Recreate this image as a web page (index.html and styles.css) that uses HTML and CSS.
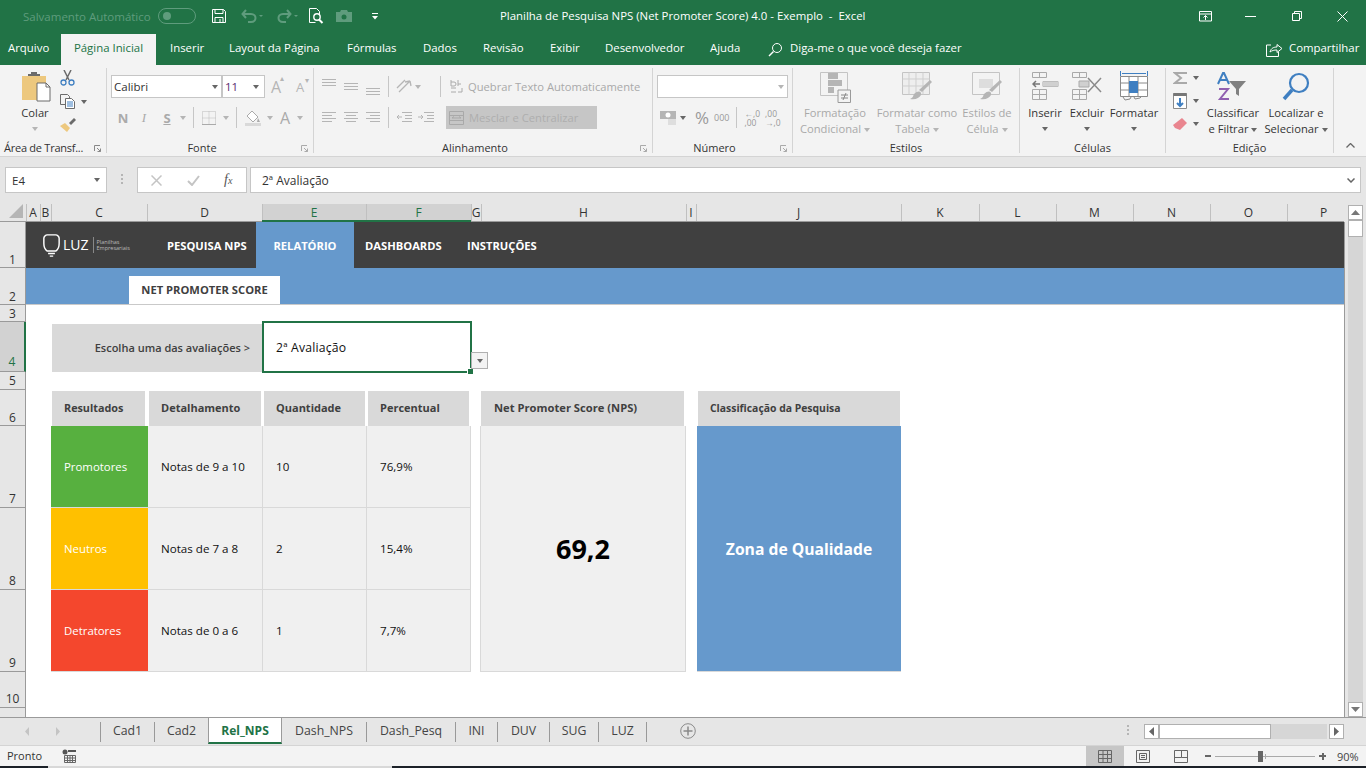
FILE: index.html
```html
<!DOCTYPE html>
<html lang="pt-br">
<head>
    <meta charset="utf-8">
    <title>Planilha de Pesquisa NPS (Net Promoter Score) 4.0 - Exemplo - Excel</title>
    <link rel="stylesheet" href="styles.css">
</head>
<body>
<div id="app">
    <div id="titlebar">
        <span class="autosave">Salvamento Automático</span>
        <span class="toggle"><i></i></span>
        <div class="quick">
            <svg class="q-save" width="14" height="14" viewBox="0 0 14 14"><path d="M.5.5h11l2 2v11H.5zM3 .5v4h8v-4M3 13.5V8.5h8v5M8 10v3" fill="none" stroke="#fff"/></svg>
            <svg class="q-undo" width="22" height="14" viewBox="0 0 22 14"><path d="M5 1 1.500 5 5 9M2 5h8c6 0 6 8 0 8H7" fill="none" stroke="#5f9c7d" stroke-width="2"/><path d="M18 6h4l-2 2z" fill="#5f9c7d"/></svg>
            <svg class="q-redo" width="22" height="14" viewBox="0 0 22 14"><path d="M11 1l3.500 4L11 9M14 5H7c-6 0-6 8 0 8h3" fill="none" stroke="#5f9c7d" stroke-width="2"/><path d="M18 6h4l-2 2z" fill="#5f9c7d"/></svg>
            <svg class="q-prev" width="15" height="16" viewBox="0 0 15 16"><path d="M.5.500h7l3 3v3M.5.500v14h6" fill="none" stroke="#fff"/><circle cx="8" cy="9" r="3.200" fill="none" stroke="#fff" stroke-width="1.400"/><path d="M10 11.500l3.500 3.500" stroke="#fff" stroke-width="2"/></svg>
            <svg class="q-cam" width="16" height="12" viewBox="0 0 16 12"><path d="M0 2h4l1-2h6l1 2h4v10H0z" fill="#5f9c7d"/><circle cx="8" cy="7" r="2.500" fill="#217346"/></svg>
            <svg class="q-more" width="8" height="7" viewBox="0 0 8 7"><path d="M1 .5h6" stroke="#fff"/><path d="M1 3h6L4 6.500z" fill="#fff"/></svg>
        </div>
        <span class="doc-title">Planilha de Pesquisa NPS (Net Promoter Score) 4.0 - Exemplo &nbsp;- &nbsp;Excel</span>
        <div class="winbtns">
            <svg width="14" height="11" viewBox="0 0 14 11"><path d="M.5.500h12v9.500H.5zM.5 3h12M6.500 9V4.500M4.500 6.500l2-2 2 2" fill="none" stroke="#fff"/></svg>
            <svg width="11" height="1" viewBox="0 0 11 1"><path d="M0 .5h11" stroke="#fff"/></svg>
            <svg width="10" height="10" viewBox="0 0 10 10"><path d="M.5 2.500h7v7h-7zM2.500 2.500v-2h7v7h-2" fill="none" stroke="#fff"/></svg>
            <svg width="11" height="11" viewBox="0 0 11 11"><path d="M.5.500l10 10M10.500.500l-10 10" stroke="#fff"/></svg>
        </div>
    </div>

    <div id="menutabs">
        <a class="menu-file">Arquivo</a>
        <a class="menu-home">Página Inicial</a>
        <a class="m-inserir">Inserir</a>
        <a class="m-layout">Layout da Página</a>
        <a class="m-form">Fórmulas</a>
        <a class="m-dados">Dados</a>
        <a class="m-rev">Revisão</a>
        <a class="m-exib">Exibir</a>
        <a class="m-dev">Desenvolvedor</a>
        <a class="m-ajuda">Ajuda</a>
        <svg class="m-bulb" width="15" height="15" viewBox="0 0 15 15"><circle cx="9" cy="6" r="4.500" fill="none" stroke="#fff"/><path d="M5.500 9.500L1 14" stroke="#fff" stroke-width="1.500"/></svg>
        <span class="m-tell">Diga-me o que você deseja fazer</span>
        <svg class="m-share" width="17" height="15" viewBox="0 0 17 15"><path d="M5 3H.5v11.500h12V10" fill="none" stroke="#fff"/><path d="M4 10c1-4 4-5 7-5V2.500L16 6.500l-5 4V8c-3 0-5 .5-7 2z" fill="none" stroke="#fff"/></svg>
        <span class="m-comp">Compartilhar</span>
    </div>

    <div id="ribbon">
        <section class="group g-clip">
            <div class="tools">
                <div class="big b-paste">
                    <svg width="30" height="30" viewBox="0 0 30 30"><path d="M0 4h24v24H0z" fill="#edc87e"/><path d="M6 4h12v-2h-3V0h-6v2H6z" fill="#6b6b6b"/><path d="M15 11h9l4 4v14H15z" fill="#fff" stroke="#6b6b6b"/><path d="M24 11v4h4" fill="none" stroke="#6b6b6b"/></svg>
                    <span class="lbl">Colar</span>
                    <b class="caret"></b>
                </div>
                <div class="clip-col">
                    <svg width="15" height="16" viewBox="0 0 15 16"><path d="M4 0l5 10M11 0L6 10" stroke="#6b6b6b" stroke-width="1.500"/><circle cx="3.500" cy="12.500" r="2.500" fill="none" stroke="#3f7fc1" stroke-width="1.300"/><circle cx="11.500" cy="12.500" r="2.500" fill="none" stroke="#3f7fc1" stroke-width="1.300"/></svg>
                    <div class="clip-copy">
                        <svg width="16" height="15" viewBox="0 0 16 15"><path d="M.5.500h7l2 2v2M.5.500v10H5" fill="none" stroke="#6b6b6b"/><path d="M5.500 4.500h6l3 3v7h-9z" fill="#fff" stroke="#6b6b6b"/><path d="M7 8h6M7 10h6M7 12h6" stroke="#3f7fc1"/></svg>
                        <b class="caret dark"></b>
                    </div>
                    <svg width="16" height="15" viewBox="0 0 16 15"><path d="M9 6L14 1l2 2-5 5z" fill="#6b6b6b"/><path d="M0 9l5-3 5 5-3 4z" fill="#edc87e"/></svg>
                </div>
            </div>
            <footer>Área de Transf...<svg class="launch" viewBox="0 0 7 7"><path d="M.5 6V.5H6M3 3l3.500 3.500M6.500 3.500v3h-3" fill="none" stroke="#888"/></svg></footer>
        </section>

        <section class="group g-font">
            <div class="rows">
                <div class="row r-a">
                    <div class="combo c-font"><span>Calibri</span><b class="caret dark"></b></div>
                    <div class="combo c-size"><span>11</span><b class="caret dark"></b></div>
                    <span class="grow-a">A<sup>▴</sup></span>
                    <span class="shrink-a">A<sup>▾</sup></span>
                </div>
                <div class="row r-b">
                    <span class="fmt f-n">N</span>
                    <span class="fmt f-i">I</span>
                    <span class="fmt f-s">S</span>
                    <b class="caret"></b>
                    <i class="vsep s1"></i>
                    <svg class="f-border" width="14" height="14" viewBox="0 0 14 14"><path d="M.5.500h13v13H.5zM7 .5v13M.5 7h13" fill="none" stroke="#bbb" stroke-dasharray="1 1"/><path d="M0 13.500h14" stroke="#aaa"/></svg>
                    <b class="caret"></b>
                    <i class="vsep s2"></i>
                    <svg class="f-fill" width="16" height="16" viewBox="0 0 16 16"><path d="M7 1l6 6-5 5-6-6z" fill="#fff" stroke="#aaa"/><path d="M13 8l2 4h-3z" fill="#aaa"/><path d="M0 13h16v3H0z" fill="#d9d9d9"/></svg>
                    <b class="caret"></b>
                    <span class="fmt f-a">A</span>
                    <b class="caret"></b>
                </div>
            </div>
            <footer class="has-launch">Fonte<svg class="launch" viewBox="0 0 7 7"><path d="M.5 6V.5H6M3 3l3.500 3.500M6.500 3.500v3h-3" fill="none" stroke="#aaa"/></svg></footer>
        </section>

        <section class="group g-align">
            <div class="rows">
                <div class="row r-a">
                    <svg class="al" width="14" height="16" viewBox="0 0 14 16"><path d="M0 .5h14M0 3.500h14M0 6.500h14" stroke="#b5b5b5"/></svg>
                    <svg class="al" width="14" height="16" viewBox="0 0 14 16"><path d="M0 4.500h14M0 7.500h14M0 10.500h14" stroke="#b5b5b5"/></svg>
                    <svg class="al" width="14" height="16" viewBox="0 0 14 16"><path d="M0 9.500h14M0 12.500h14M0 15.500h14" stroke="#b5b5b5"/></svg>
                    <i class="vsep al-s1"></i>
                    <svg class="al-or" width="16" height="15" viewBox="0 0 16 15"><path d="M1 9l8-8M3 13l11-11M14 2l1 5M14 2L9 3" fill="none" stroke="#b5b5b5" stroke-width="1.300"/></svg>
                    <b class="caret"></b>
                    <i class="vsep al-s2"></i>
                    <svg class="al-wrap" width="13" height="15" viewBox="0 0 13 15"><path d="M1 1v6h3a2 2 0 0 0 0-4H1M8 1v6M8 5h3M1 9h5M1 13h5M12 9v4H8" fill="none" stroke="#aaa"/></svg>
                    <span class="dis">Quebrar Texto Automaticamente</span>
                </div>
                <div class="row r-b">
                    <svg class="al" width="14" height="12" viewBox="0 0 14 12"><path d="M0 .5h14M0 3.500h10M0 6.500h14M0 9.500h10" stroke="#b5b5b5"/></svg>
                    <svg class="al" width="14" height="12" viewBox="0 0 14 12"><path d="M0 .5h14M2 3.500h10M0 6.500h14M2 9.500h10" stroke="#b5b5b5"/></svg>
                    <svg class="al" width="14" height="12" viewBox="0 0 14 12"><path d="M0 .5h14M4 3.500h10M0 6.500h14M4 9.500h10" stroke="#b5b5b5"/></svg>
                    <i class="vsep al-s1"></i>
                    <svg class="al-or" width="16" height="12" viewBox="0 0 16 12"><path d="M6 .5h10M9 3.500h7M9 6.500h7M6 9.500h10M6 5H1M3 3L1 5l2 2" fill="none" stroke="#b5b5b5"/></svg>
                    <svg class="al-in" width="16" height="12" viewBox="0 0 16 12"><path d="M6 .5h10M9 3.500h7M9 6.500h7M6 9.500h10M0 5h5M3 3l2 2-2 2" fill="none" stroke="#b5b5b5"/></svg>
                    <div class="merge">
                        <svg width="15" height="14" viewBox="0 0 15 14"><path d="M.5.500h14v13H.5zM.5 4.500h14M.5 9.500h14M3 7h9M3 7l2-1.500M12 7l-2-1.500" fill="none" stroke="#a9a9a9"/></svg>
                        <span>Mesclar e Centralizar</span>
                    </div>
                </div>
            </div>
            <footer class="has-launch">Alinhamento<svg class="launch" viewBox="0 0 7 7"><path d="M.5 6V.5H6M3 3l3.500 3.500M6.500 3.500v3h-3" fill="none" stroke="#aaa"/></svg></footer>
        </section>

        <section class="group g-num">
            <div class="rows">
                <div class="row r-a"><div class="combo c-num"><span></span><b class="caret"></b></div></div>
                <div class="row r-b">
                    <svg class="n-cur" width="17" height="16" viewBox="0 0 17 16"><path d="M0 1h16v8H0z" fill="#b5b5b5"/><circle cx="8" cy="5" r="2.500" fill="#fff"/><path d="M8 10h8M8 12h8M8 14h8" stroke="#c9c9c9" stroke-width="1.200"/></svg>
                    <b class="caret dark"></b>
                    <span class="n-pct">%</span>
                    <span class="n-mil">000</span>
                    <i class="vsep n-s"></i>
                    <span class="n-inc">←,0<br>,00</span>
                    <span class="n-dec">,00<br>→,0</span>
                </div>
            </div>
            <footer class="has-launch">Número<svg class="launch" viewBox="0 0 7 7"><path d="M.5 6V.5H6M3 3l3.500 3.500M6.500 3.500v3h-3" fill="none" stroke="#aaa"/></svg></footer>
        </section>

        <section class="group g-styles">
            <div class="tools">
                <div class="big st1">
                    <svg width="31" height="31" viewBox="0 0 31 31"><path d="M.5.500h27v23H.5z" fill="#f3f3f3" stroke="#c4c4c4"/><path d="M8 1h10v6H8zM8 8h14v6H8zM8 15h6v6H8z" fill="#b5b5b5"/><path d="M18 18h12.500v12.500H18z" fill="#f3f3f3" stroke="#9a9a9a"/><path d="M21 23h7M21 26h7M26 21l-3 7" stroke="#888"/></svg>
                    <span class="dis">Formatação</span>
                    <span class="dis">Condicional<b class="caret in"></b></span>
                </div>
                <div class="big st2">
                    <svg width="31" height="31" viewBox="0 0 31 31"><path d="M.5.500h27v22H.5z" fill="#eee" stroke="#c4c4c4"/><path d="M.5 7h27M.5 14h27M7 .5v22M14 .5v22M21 .5v22" stroke="#cfcfcf"/><path d="M30 10L20 20l-3-2 11-10z" fill="#b5b5b5"/><path d="M12 22c4-4 8-3 7 1-2 3-5 5-11 4 3-1 3-3 4-5z" fill="#b5b5b5"/></svg>
                    <span class="dis">Formatar como</span>
                    <span class="dis">Tabela<b class="caret in"></b></span>
                </div>
                <div class="big st3">
                    <svg width="31" height="31" viewBox="0 0 31 31"><path d="M.5.500h27v22H.5z" fill="#f3f3f3" stroke="#c4c4c4"/><path d="M7 7h14v9H7z" fill="#ddd"/><path d="M30 10L20 20l-3-2 11-10z" fill="#b5b5b5"/><path d="M12 22c4-4 8-3 7 1-2 3-5 5-11 4 3-1 3-3 4-5z" fill="#b5b5b5"/></svg>
                    <span class="dis">Estilos de</span>
                    <span class="dis">Célula<b class="caret in"></b></span>
                </div>
            </div>
            <footer>Estilos</footer>
        </section>

        <section class="group g-cells">
            <div class="tools">
                <div class="big ce1">
                    <svg width="27" height="29" viewBox="0 0 27 29"><path d="M.5.500h14v5H.5zM7.500.5v5M.5 17.500h14v10H.5zM.5 22.500h14M7.500 17.500v10M11 9.500h15v5H11zM18.500 9.500v5" fill="none" stroke="#a9a9a9"/><path d="M11 9.500h15v5H11z" fill="#d0d0d0"/><path d="M8 12H1M4 9l-3 3 3 3" fill="none" stroke="#777" stroke-width="1.500"/></svg>
                    <span class="lbl">Inserir</span><b class="caret dark"></b>
                </div>
                <div class="big ce2">
                    <svg width="30" height="29" viewBox="0 0 30 29"><path d="M.5.500h14v5H.5zM7.500.5v5M.5 17.500h14v10H.5zM.5 22.500h14M7.500 17.500v10" fill="none" stroke="#a9a9a9"/><path d="M7 9h10v6H7z" fill="#d0d0d0" stroke="#a9a9a9"/><path d="M16 6l13 14M29 6L16 20" stroke="#8a8a8a" stroke-width="1.500"/></svg>
                    <span class="lbl">Excluir</span><b class="caret dark"></b>
                </div>
                <div class="big ce3">
                    <svg width="28" height="31" viewBox="0 0 28 31"><path d="M.5 1v5M27.500 1v5M2 3.500h24" stroke="#3f7fc1"/><path d="M.5 6.500h27v20H.5zM.5 13h27M.5 20h27M9 6.500v20M18 6.500v20" fill="#fff" stroke="#8a8a8a"/><path d="M9 11h9v12H9z" fill="#3f7fc1"/><path d="M3 27l2 3 5-1 1-2M14 27l1 2 5-1 1-1" fill="none" stroke="#8a8a8a"/></svg>
                    <span class="lbl">Formatar</span><b class="caret dark"></b>
                </div>
            </div>
            <footer>Células</footer>
        </section>

        <section class="group g-edit">
            <div class="tools">
                <div class="edit-col">
                    <div class="edit-item"><svg width="14" height="12" viewBox="0 0 14 12"><path d="M14 1H2l6 5-6 5h12" fill="none" stroke="#a9a9a9" stroke-width="2"/></svg><b class="caret dark"></b></div>
                    <div class="edit-item"><svg width="14" height="16" viewBox="0 0 14 16"><path d="M.5.500h13v15H.5z" fill="#fff" stroke="#8a8a8a"/><path d="M.5 0h13v3H.5z" fill="#777"/><path d="M7 5v8M4 10l3 3 3-3" fill="none" stroke="#3f7fc1" stroke-width="2"/></svg><b class="caret dark"></b></div>
                    <div class="edit-item"><svg width="14" height="13" viewBox="0 0 14 13"><path d="M9 0l5 5-7 7-5-2-2-3z" fill="#e9858f"/></svg><b class="caret dark"></b></div>
                </div>
                <div class="big ed1">
                    <svg width="32" height="29" viewBox="0 0 32 29"><path d="M1 12L6 1h1l5 11M3 8h7" fill="none" stroke="#3f7fc1" stroke-width="2"/><path d="M2 17h9l-8 10h9" fill="none" stroke="#9060b0" stroke-width="2"/><path d="M12 9h17l-7 8v7l-3-2v-5z" fill="#808080"/></svg>
                    <span class="lbl">Classificar</span>
                    <span class="lbl">e Filtrar<b class="caret dark in"></b></span>
                </div>
                <div class="big ed2">
                    <svg width="28" height="30" viewBox="0 0 28 30"><circle cx="17" cy="11" r="9" fill="none" stroke="#3f7fc1" stroke-width="2.200"/><path d="M10 18L2 27" stroke="#3f7fc1" stroke-width="3.500"/></svg>
                    <span class="lbl">Localizar e</span>
                    <span class="lbl">Selecionar<b class="caret dark in"></b></span>
                </div>
            </div>
            <footer>Edição</footer>
        </section>
        <svg class="collapse" width="9" height="5" viewBox="0 0 9 5"><path d="M.5 4.500l4-4 4 4" fill="none" stroke="#666" stroke-width="1.300"/></svg>
    </div>

    <div id="formulabar">
        <div class="namebox"><span>E4</span><b class="caret dark"></b></div>
        <span class="fb-dots"></span>
        <div class="fb-btns">
            <svg width="11" height="11" viewBox="0 0 11 11"><path d="M.5.500l10 10M10.500.500l-10 10" stroke="#c4c4c4" stroke-width="1.500"/></svg>
            <svg width="13" height="11" viewBox="0 0 13 11"><path d="M1 6l4 4 7-9" fill="none" stroke="#c4c4c4" stroke-width="2"/></svg>
            <em>f<small>x</small></em>
        </div>
        <div class="fb-input"><span>2ª Avaliação</span><svg width="8" height="5" viewBox="0 0 8 5"><path d="M.5.500L4 4 7.500.500" fill="none" stroke="#666" stroke-width="1.500"/></svg></div>
    </div>

    <div id="workarea">
        <div id="sheet">
            <div class="corner"><svg width="14" height="14" viewBox="0 0 14 14"><path d="M14 0v14H0z" fill="#b5b5b5"/></svg></div>
            <div class="ch">A</div><div class="ch">B</div><div class="ch">C</div><div class="ch">D</div>
            <div class="ch on">E</div><div class="ch on">F</div><div class="ch">G</div><div class="ch">H</div>
            <div class="ch">I</div><div class="ch">J</div><div class="ch">K</div><div class="ch">L</div>
            <div class="ch">M</div><div class="ch">N</div><div class="ch">O</div><div class="ch ch-last">P</div>

            <div class="rh r1">1</div><div class="rh r2">2</div><div class="rh r3">3</div>
            <div class="rh r4 on">4</div><div class="rh r5">5</div><div class="rh r6">6</div>
            <div class="rh r7">7</div><div class="rh r8">8</div><div class="rh r9">9</div><div class="rh r10">10</div>
            <div class="rh r11"></div>

            <nav class="navband">
                <div class="logo">
                    <svg width="17" height="25" viewBox="0 0 20 27"><path d="M5 20C2 18 1 15 1 11V5c0-2 2-4 4-4h10c2 0 4 2 4 4v6c0 4-1 7-4 9zM6 23h8M8 26h4" fill="none" stroke="#fff" stroke-width="1.700"/></svg>
                    <span class="logo-luz">LUZ</span>
                    <span class="logo-sub">Planilhas<br>Empresariais</span>
                </div>
                <a class="n1">PESQUISA NPS</a>
                <a class="n2">RELATÓRIO</a>
                <a class="n3">DASHBOARDS</a>
                <a class="n4">INSTRUÇÕES</a>
            </nav>
            <div class="subband"><span>NET PROMOTER SCORE</span></div>

            <div class="pick-label">Escolha uma das avaliações &gt;</div>
            <div class="pick-cell">2ª Avaliação<i class="handle"></i><span class="dd"><b class="caret dark"></b></span></div>

            <div class="th c-c">Resultados</div>
            <div class="th c-d">Detalhamento</div>
            <div class="th c-e">Quantidade</div>
            <div class="th c-f">Percentual</div>
            <div class="th c-h">Net Promoter Score (NPS)</div>
            <div class="th c-j">Classificação da Pesquisa</div>

            <div class="td res green y7">Promotores</div>
            <div class="td c-d y7">Notas de 9 a 10</div>
            <div class="td c-e y7">10</div>
            <div class="td c-f y7">76,9%</div>
            <div class="td res amber y8">Neutros</div>
            <div class="td c-d y8">Notas de 7 a 8</div>
            <div class="td c-e y8">2</div>
            <div class="td c-f y8">15,4%</div>
            <div class="td res red y9">Detratores</div>
            <div class="td c-d y9">Notas de 0 a 6</div>
            <div class="td c-e y9">1</div>
            <div class="td c-f y9">7,7%</div>

            <div class="score">69,2</div>
            <div class="zone">Zona de Qualidade</div>
        </div>
        <div class="vscroll">
            <span class="sbtn"><svg width="9" height="5" viewBox="0 0 9 5"><path d="M4.500 0L9 5H0z" fill="#777"/></svg></span>
            <span class="vthumb"></span>
            <span class="vtrack"></span>
            <span class="sbtn"><svg width="9" height="5" viewBox="0 0 9 5"><path d="M4.500 5L9 0H0z" fill="#777"/></svg></span>
        </div>
    </div>

    <div id="tabsbar">
        <svg class="tab-nav" width="36" height="9" viewBox="0 0 36 9"><path d="M4 0v9L0 4.500zM31 0v9l4-4.500z" fill="#c4c4c4"/></svg>
        <div class="tabs">
            <a>Cad1</a><a>Cad2</a><a class="active">Rel_NPS</a><a>Dash_NPS</a><a>Dash_Pesq</a><a>INI</a><a>DUV</a><a>SUG</a><a>LUZ</a>
        </div>
        <svg class="tab-add" width="16" height="16" viewBox="0 0 16 16"><circle cx="8" cy="8" r="7.300" fill="none" stroke="#8a8a8a"/><path d="M8 3.500v9M3.500 8h9" stroke="#8a8a8a" stroke-width="1.500"/></svg>
        <span class="tab-dots"></span>
        <div class="hscroll">
            <span class="sbtn"><svg width="5" height="9" viewBox="0 0 5 9"><path d="M0 4.500L5 0v9z" fill="#666"/></svg></span>
            <span class="hthumb"></span>
            <span class="htrack"></span>
            <span class="sbtn"><svg width="5" height="9" viewBox="0 0 5 9"><path d="M5 4.500L0 0v9z" fill="#666"/></svg></span>
        </div>
    </div>

    <div id="statusbar">
        <span class="st-ready">Pronto</span>
        <svg class="st-macro" width="14" height="14" viewBox="0 0 14 14"><circle cx="3" cy="3" r="2.500" fill="#555"/><path d="M6 1h8v2H6z" fill="#555"/><path d="M2.500 6.500h11v7h-11zM2.500 9h11M2.500 11.500h11M5.500 6.500v7M8 6.500v7M10.500 6.500v7" fill="none" stroke="#666"/></svg>
        <div class="views">
            <span class="view on"><svg width="14" height="13" viewBox="0 0 14 13"><path d="M.5.500h13v12H.5zM.5 4.500h13M.5 8.500h13M5 .5v12M9.500 .5v12" fill="none" stroke="#666"/></svg></span>
            <span class="view"><svg width="14" height="13" viewBox="0 0 14 13"><path d="M.5.500h13v12H.5zM3.500 3.500h7v6h-7zM5 5.500h4M5 7.500h4" fill="none" stroke="#666"/></svg></span>
            <span class="view"><svg width="14" height="13" viewBox="0 0 14 13"><path d="M.5.500h13v12H.5zM.5 7.500h7v-7M7.500 7.500h6" fill="none" stroke="#666"/></svg></span>
        </div>
        <div class="zoom">
            <i class="z-minus"></i>
            <div class="z-track"><i class="z-mid"></i><i class="z-thumb"></i></div>
            <i class="z-plus"></i>
            <span>90%</span>
        </div>
    </div>
    <div id="taskstrip"><i></i></div>
</div>
</body>
</html>
```

FILE: styles.css
```css
* {
    box-sizing: border-box;
}

html, body {
    margin: 0;
    height: 100%;
    overflow: hidden;
}

body {
    font-family: "Open Sans", "Noto Sans", sans-serif;
    font-size: 12px;
    color: #333;
}

#app {
    width: 1366px;
    height: 768px;
    display: flex;
    flex-direction: column;
    background: #e6e6e6;
}

svg {
    display: block;
    flex: none;
}

.caret {
    display: block;
    flex: none;
    width: 0;
    height: 0;
    border-left: 3.500px solid transparent;
    border-right: 3.500px solid transparent;
    border-top: 4px solid #b5b5b5;
}

.caret.dark {
    border-top-color: #666;
}

/* title bar */

#titlebar {
    height: 34px;
    flex: none;
    background: #217346;
    color: #fff;
    display: flex;
    align-items: center;
    padding: 0 0 2px 23px;
    position: relative;
}

.autosave {
    width: 135px;
    color: #5f9c7d;
    font-size: 11.500px;
    white-space: nowrap;
}

.toggle {
    width: 38px;
    height: 16px;
    border: 1px solid #5f9c7d;
    border-radius: 8px;
    padding: 3px 4px;
}

.toggle i {
    display: block;
    width: 8px;
    height: 8px;
    border-radius: 50%;
    background: #5f9c7d;
}

.quick {
    display: flex;
    align-items: center;
    margin-left: 16px;
}

.q-undo { margin-left: 15px; }
.q-redo { margin-left: 13px; }
.q-prev { margin-left: 11px; }
.q-cam { margin-left: 12px; }
.q-more { margin-left: 19px; }

.doc-title {
    position: absolute;
    left: 500px;
    top: 8px;
    white-space: nowrap;
    font-size: 11.400px;
}

.winbtns {
    margin-left: auto;
    display: flex;
    align-items: center;
    width: 168px;
    padding-left: 1px;
}

.winbtns svg:nth-child(1) { margin-right: 32px; }
.winbtns svg:nth-child(2) { margin-right: 36px; }
.winbtns svg:nth-child(3) { margin-right: 35px; }

/* menu tabs */

#menutabs {
    height: 31px;
    flex: none;
    background: #217346;
    position: relative;
    color: #fff;
}

#menutabs a, #menutabs span, #menutabs svg {
    position: absolute;
    top: 6px;
    white-space: nowrap;
    font-size: 11.400px;
}

#menutabs .menu-home {
    left: 61px;
    top: 0;
    width: 95px;
    height: 31px;
    padding-top: 6px;
    background: #f3f3f3;
    color: #217346;
    text-align: center;
}

.menu-file { left: 8px; }
.m-inserir { left: 170px; }
.m-layout { left: 229px; }
.m-form { left: 347px; }
.m-dados { left: 423px; }
.m-rev { left: 483px; }
.m-exib { left: 550px; }
.m-dev { left: 605px; }
.m-ajuda { left: 710px; }
#menutabs .m-bulb { left: 768px; top: 8px; }
.m-tell { left: 790px; }
#menutabs .m-share { left: 1266px; top: 8px; }
.m-comp { left: 1289px; }

/* ribbon */

#ribbon {
    height: 92px;
    flex: none;
    background: #f3f3f3;
    border-bottom: 1px solid #d4d4d4;
    display: flex;
    padding-top: 3px;
    position: relative;
}

.group {
    position: relative;
    border-right: 1px solid #d4d4d4;
    height: 85px;
    flex: none;
}

.group footer {
    position: absolute;
    left: 0;
    right: 0;
    bottom: -3px;
    height: 16px;
    line-height: 16px;
    text-align: center;
    font-size: 11px;
    white-space: nowrap;
}

.group footer.has-launch {
    padding-right: 16px;
}

.launch {
    position: absolute;
    right: 5px;
    top: 5px;
    width: 7px;
    height: 7px;
}

.g-clip { width: 107px; }
.g-font { width: 207px; }
.g-align { width: 339px; }
.g-num { width: 140px; }
.g-styles { width: 227px; }
.g-cells { width: 146px; }
.g-edit { width: 168px; }

.g-clip footer {
    text-align: left;
    padding-left: 4px;
    letter-spacing: -.25px;
}

.tools {
    display: flex;
}

.big {
    display: flex;
    flex-direction: column;
    align-items: center;
    flex: none;
    line-height: 16px;
    white-space: nowrap;
}

.big svg {
    margin-bottom: 2px;
}

.lbl {
    color: #333;
    font-size: 11.200px;
}

.dis {
    color: #a9a9a9;
    font-size: 11.200px;
}

.big > .caret {
    margin-top: 6px;
}

.caret.in {
    display: inline-block;
    vertical-align: middle;
    margin-left: 3px;
}

.b-paste {
    width: 30px;
    margin-left: 22px;
    padding-top: 4px;
}

.b-paste svg { margin-bottom: 3px; }

.b-paste .lbl, .b-paste .caret {
    margin-left: -4px;
}

.clip-col {
    margin-left: 8px;
    display: flex;
    flex-direction: column;
    gap: 8px;
    padding-top: 2px;
}

.clip-copy {
    display: flex;
    align-items: center;
    gap: 5px;
}

.rows {
    display: flex;
    flex-direction: column;
}

.row {
    display: flex;
    align-items: center;
    height: 23px;
}

.row.r-a {
    margin-top: 7px;
}

.row.r-b {
    margin-top: 8px;
}

.combo {
    height: 23px;
    background: #fff;
    border: 1px solid #c6c6c6;
    display: flex;
    align-items: center;
    justify-content: space-between;
    padding: 0 3px 0 2px;
    font-size: 11.500px;
    flex: none;
}

.vsep {
    display: block;
    width: 1px;
    height: 21px;
    background: #c6c6c6;
    flex: none;
}

/* font group */

.g-font .rows { padding-left: 4px; }

.c-font { width: 111px; }
.c-size { width: 43px; color: #5b2c6f; padding-right: 5px; }

.grow-a, .shrink-a {
    color: #b5b5b5;
    font-size: 16px;
    margin-left: 6px;
    width: 16px;
    position: relative;
}

.shrink-a { font-size: 13px; margin-left: 9px; }

.grow-a sup, .shrink-a sup {
    position: absolute;
    left: 9px;
    top: -4px;
    font-size: 8px;
}

.fmt {
    color: #aaa;
    font-weight: 700;
    font-size: 13px;
    width: 12px;
    text-align: center;
    flex: none;
}

.f-n { margin-left: 6px; }
.f-i { margin-left: 9px; font-style: italic; font-weight: 400; font-family: "Liberation Serif", serif; }
.f-s { margin-left: 11px; text-decoration: underline; }
.r-b .f-s + .caret { margin-left: 7px; }
.s1 { margin-left: 7px; }
.f-border { margin-left: 8px; }
.f-border + .caret { margin-left: 7px; }
.s2 { margin-left: 7px; }
.f-fill { margin-left: 8px; }
.f-fill + .caret { margin-left: 6px; }
.f-a { font-size: 16px; margin-left: 6px; font-weight: 400; }
.f-a + .caret { margin-left: 6px; }

/* alignment group */

.g-align .rows { padding-left: 8px; }

.al { margin-right: 8px; }
.al-or { margin-left: 7px; }
.al-or + .caret { margin-left: 3px; }
.al-s2 { margin-left: 19px; }
.al-wrap { margin-left: 9px; margin-right: 5px; }
.al-in { margin-left: 6px; }

.merge {
    margin-left: 12px;
    width: 151px;
    height: 23px;
    background: #c6c6c6;
    display: flex;
    align-items: center;
    gap: 5px;
    padding-left: 3px;
    color: #aeaeae;
    font-size: 11.200px;
    white-space: nowrap;
}

/* number group */

.g-num .rows { padding-left: 4px; }

.c-num { width: 131px; justify-content: flex-end; }

.n-cur { margin-left: 3px; }
.n-cur + .caret { margin-left: 3px; }
.n-pct { margin-left: 9px; font-size: 17px; line-height: 20px; color: #999; }
.n-mil { margin-left: 5px; font-size: 9px; color: #999; }
.n-s { margin-left: 6px; }

.n-inc, .n-dec {
    font-size: 8.500px;
    line-height: 9px;
    color: #999;
    white-space: nowrap;
}

.n-inc { margin-left: 8px; }
.n-dec { margin-left: 5px; }

/* styles group */

.g-styles .tools {
    padding-top: 4px;
}

.st1 { width: 84px; }
.st2 { width: 84px; margin-left: -2px; }
.st3 { width: 60px; margin-left: -2px; }

/* cells group */

.g-cells .tools { padding-top: 4px; padding-left: 6px; }
.ce1 { width: 38px; }
.ce2 { width: 46px; }
.ce3 { width: 52px; margin-left: -2px; }
.g-cells .big svg { margin-bottom: 4px; }
.ce3 svg { margin-top: -2px; }

/* editing group */

.g-edit .tools { padding-top: 2px; padding-left: 7px; }

.edit-col {
    width: 32px;
    display: flex;
    flex-direction: column;
    gap: 7px;
}

.edit-item {
    display: flex;
    align-items: center;
    gap: 6px;
    height: 16px;
}

.ed1 { width: 60px; margin-left: -2px; margin-top: 2px; }
.ed2 { width: 62px; margin-left: 2px; margin-top: 2px; }
.ed1 svg { margin-bottom: 4px; }
.ed2 svg { margin-bottom: 3px; }

.collapse {
    position: absolute;
    left: 1346px;
    top: 78px;
}

/* formula bar */

#formulabar {
    height: 47px;
    flex: none;
    padding: 10px 5px 11px;
    display: flex;
    align-items: stretch;
}

.namebox, .fb-btns, .fb-input {
    background: #fff;
    border: 1px solid #c6c6c6;
    display: flex;
    align-items: center;
    flex: none;
}

.namebox {
    width: 102px;
    justify-content: space-between;
    padding: 0 6px;
    font-size: 11.500px;
}

.fb-dots {
    width: 2px;
    margin: 7px 14px 7px 14px;
    background: repeating-linear-gradient(#b5b5b5 0 2px, transparent 2px 4px);
}

.fb-btns {
    width: 110px;
    padding-left: 13px;
    gap: 25px;
}

.fb-btns em {
    font-family: "Liberation Serif", serif;
    color: #555;
    font-size: 14px;
    margin-left: -1px;
}

.fb-btns small { font-size: 10px; }

.fb-input {
    width: 1111px;
    margin-left: 3px;
    padding: 0 5px 0 11px;
    justify-content: space-between;
    font-size: 12px;
}

/* sheet */

#workarea {
    height: 513px;
    flex: none;
    display: flex;
}

#sheet {
    width: 1344px;
    background: #fff;
    display: grid;
    grid-template-columns: 26px 14px 11px 96px 115px 104px 105px 10px 205px 10px 205px 78px 77px 77px 77px 77px 57px;
    grid-template-rows: 18px 46px 37px 17px 50px 18px 36px 82px 82px 82px 36px 9px;
    position: relative;
}

.corner {
    background: #e6e6e6;
    border-bottom: 1px solid #9a9a9a;
    display: flex;
    justify-content: flex-end;
    align-items: flex-end;
    padding: 0 3px 3px 0;
}

.ch {
    background: #e6e6e6;
    border-bottom: 1px solid #9a9a9a;
    text-align: center;
    line-height: 17px;
    font-size: 12px;
    color: #333;
    position: relative;
}

.ch::before {
    content: "";
    position: absolute;
    left: 0;
    top: 0;
    bottom: 0;
    width: 1px;
    background: #c0c0c0;
}

.ch.on {
    background: #d2d2d2;
    color: #217346;
    border-bottom: 2px solid #217346;
}

.ch-last {
    text-align: left;
    padding-left: 33px;
}

.rh {
    grid-column: 1;
    background: #e6e6e6;
    border-right: 1px solid #9a9a9a;
    border-bottom: 1px solid #9a9a9a;
    display: flex;
    align-items: flex-end;
    justify-content: center;
    font-size: 12px;
    line-height: 17px;
    color: #333;
}

.rh.on {
    background: #d2d2d2;
    color: #217346;
    border-right: 2px solid #217346;
    padding-bottom: 1px;
}

.r1 { grid-row: 2; line-height: 15px; }
.r2 { grid-row: 3; line-height: 15px; }
.r3 { grid-row: 4; line-height: 15px; }
.r4 { grid-row: 5; }
.r5 { grid-row: 6; }
.r6 { grid-row: 7; line-height: 15px; }
.r7 { grid-row: 8; }
.r8 { grid-row: 9; }
.r9 { grid-row: 10; }
.r10 { grid-row: 11; }
.r11 { grid-row: 12; border-bottom: 0; }

.navband {
    grid-column: 2 / -1;
    grid-row: 2;
    background: #404040;
    display: flex;
    align-items: center;
    color: #fff;
    font-weight: 700;
    font-size: 11.200px;
    white-space: nowrap;
}

.logo {
    display: flex;
    align-items: center;
    width: 141px;
    padding-left: 17px;
    font-weight: 400;
}

.logo-luz {
    margin-left: 3px;
    font-size: 14px;
    padding-right: 4px;
    border-right: 1px solid #888;
    line-height: 16px;
}

.logo-sub {
    margin-left: 3px;
    font-size: 5.500px;
    line-height: 6.500px;
    color: #bbb;
}

.navband a {
    display: flex;
    align-items: center;
    height: 100%;
}

.n1 { width: 89px; }

.navband .n2 {
    width: 98px;
    background: #6699cc;
    justify-content: center;
}

.n3 { margin-left: 11px; width: 102px; }

.subband {
    grid-column: 2 / -1;
    grid-row: 3;
    background: #6699cc;
    border-bottom: 1px solid #c9c9c9;
    padding: 8px 0 0 103px;
    display: flex;
}

.subband span {
    width: 151px;
    background: #fff;
    text-align: center;
    line-height: 28px;
    font-weight: 700;
    font-size: 11.200px;
    color: #404040;
    white-space: nowrap;
}

.pick-label {
    grid-column: 2 / 6;
    grid-row: 5;
    margin-left: 26px;
    background: #d9d9d9;
    margin-top: 2px;
    text-align: right;
    padding-right: 12px;
    line-height: 48px;
    font-weight: 600;
    font-size: 11px;
    color: #404040;
}

.pick-cell {
    grid-column: 6 / 8;
    grid-row: 5;
    border: 2px solid #217346;
    padding-left: 12px;
    line-height: 49px;
    font-size: 12.200px;
    letter-spacing: .2px;
    color: #111;
    position: relative;
    height: 52px;
    margin: -1px -1px 0 0;
    z-index: 1;
}

.handle {
    position: absolute;
    right: -3px;
    bottom: -3px;
    width: 5px;
    height: 5px;
    background: #217346;
    border: 1px solid #fff;
    box-sizing: content-box;
    margin: -1px;
}

.dd {
    position: absolute;
    left: 207px;
    top: 29px;
    width: 17px;
    height: 17px;
    background: #f3f3f3;
    border: 1px solid #b0b0b0;
    display: flex;
    align-items: center;
    justify-content: center;
}

.th {
    grid-row: 7;
    background: #d9d9d9;
    margin: 1px 2px 0 0;
    padding-left: 12px;
    line-height: 34px;
    font-weight: 700;
    font-size: 11px;
    color: #404040;
    white-space: nowrap;
}

.c-c { grid-column: 4; }
.c-d { grid-column: 5; }
.c-e { grid-column: 6; }
.c-f { grid-column: 7; }

.th.c-c { margin-left: 1px; font-size: 10.800px; }
.th.c-d, .th.c-e { margin-left: 2px; margin-right: 1px; }
.th.c-f { margin-left: 2px; }

.th.c-h {
    grid-column: 9;
    padding-left: 13px;
    font-size: 11.200px;
}

.th.c-j {
    grid-column: 11;
    margin-left: 2px;
    margin-right: 1px;
    font-size: 10.400px;
}

.td {
    display: flex;
    align-items: center;
    font-size: 11.600px;
    color: #111;
    background: #f0f0f0;
    border-bottom: 1px solid #d9d9d9;
    padding-left: 14px;
    white-space: nowrap;
}

.y7 { grid-row: 8; }
.y8 { grid-row: 9; }
.y9 { grid-row: 10; }

.td.c-d {
    margin-left: 1px;
    padding-left: 13px;
}

.td.c-e {
    border-left: 1px solid #d9d9d9;
    padding-left: 13px;
}

.td.c-f {
    border-left: 1px solid #d9d9d9;
    border-right: 1px solid #d9d9d9;
    padding-left: 13px;
}

.td.res {
    grid-column: 4;
    color: #fff;
    padding-left: 13px;
    margin-right: -1px;
    font-size: 11.400px;
}

.green { background: #57b03f; }
.amber { background: #ffc000; }
.red { background: #f4472d; }

.score {
    grid-column: 9;
    grid-row: 8 / 11;
    margin-left: -1px;
    background: #f0f0f0;
    border: 1px solid #d9d9d9;
    border-top: 0;
    display: flex;
    align-items: center;
    justify-content: center;
    font-weight: 700;
    font-size: 27px;
    color: #000;
}

.zone {
    grid-column: 11;
    grid-row: 8 / 11;
    margin-left: 1px;
    background: #6699cc;
    border-bottom: 1px solid #d9d9d9;
    display: flex;
    align-items: center;
    justify-content: center;
    font-weight: 700;
    font-size: 15.700px;
    color: #fff;
}

.vscroll {
    width: 22px;
    background: linear-gradient(#9a9a9a, #9a9a9a) 0 18px / 1px 100% no-repeat;
    padding: 1px 3px 0 4px;
    display: flex;
    flex-direction: column;
}

.sbtn {
    width: 15px;
    height: 15px;
    flex: none;
    background: #fff;
    border: 1px solid #b0b0b0;
    display: flex;
    align-items: center;
    justify-content: center;
}

.vthumb {
    height: 17px;
    flex: none;
    background: #fff;
    border: 1px solid #b0b0b0;
}

.vtrack {
    flex: 1;
    background: #d6d6d6;
}

/* sheet tabs */

#tabsbar {
    height: 28px;
    flex: none;
    border-top: 1px solid #9a9a9a;
    display: flex;
    align-items: flex-start;
    padding: 0 22px 0 25px;
}

.tab-nav {
    margin-top: 9px;
}

.tabs {
    display: flex;
    margin-left: 39px;
    height: 26px;
    font-size: 12.300px;
    color: #444;
}

.tabs a {
    height: 20px;
    margin-top: 4px;
    border-right: 1px solid #999;
    line-height: 18px;
    text-align: center;
    white-space: nowrap;
}

.tabs a:first-child {
    border-left: 1px solid #999;
}

.tabs a:nth-child(1) { width: 55px; }
.tabs a:nth-child(2) { width: 54px; }
.tabs a:nth-child(3) { width: 74px; }
.tabs a:nth-child(4) { width: 85px; }
.tabs a:nth-child(5) { width: 89px; }
.tabs a:nth-child(6) { width: 42px; }
.tabs a:nth-child(7) { width: 52px; }
.tabs a:nth-child(8) { width: 49px; }
.tabs a:nth-child(9) { width: 48px; }

.tabs a.active {
    height: 26px;
    margin: 0 0 0 -1px;
    padding-top: 4px;
    background: #fff;
    color: #217346;
    font-weight: 700;
    font-size: 12px;
    border: 1px solid #9a9a9a;
    border-top: 0;
    border-bottom: 2px solid #217346;
}

.tab-add {
    margin: 5px 0 0 33px;
}

.tab-dots {
    width: 2px;
    height: 12px;
    margin: 7px 15px 0 auto;
    background: repeating-linear-gradient(#b5b5b5 0 2px, transparent 2px 4px);
}

.hscroll {
    width: 200px;
    height: 15px;
    margin-top: 6px;
    display: flex;
}

.hthumb {
    width: 112px;
    background: #fff;
    border: 1px solid #b0b0b0;
}

.htrack {
    flex: 1;
    background: #d6d6d6;
    margin-right: 2px;
}

/* status bar */

#statusbar {
    height: 21px;
    flex: none;
    background: #f3f3f3;
    display: flex;
    align-items: center;
    font-size: 11px;
    padding-left: 7px;
    border-top: 1px solid #d4d4d4;
}

.st-ready {
    margin-top: -1px;
}

.st-macro {
    margin-left: 20px;
}

.views {
    display: flex;
    height: 100%;
    margin-left: auto;
}

.view {
    width: 38px;
    display: flex;
    align-items: center;
    justify-content: center;
}

.view.on {
    background: #c6c6c6;
}

.zoom {
    display: flex;
    align-items: center;
    margin-left: 5px;
    width: 161px;
}

.z-minus {
    width: 6px;
    height: 2px;
    background: #666;
}

.z-track {
    width: 100px;
    height: 1px;
    background: #a9a9a9;
    margin-left: 4px;
    position: relative;
}

.z-mid {
    position: absolute;
    left: 50px;
    top: -2px;
    width: 1px;
    height: 5px;
    background: #a9a9a9;
}

.z-thumb {
    position: absolute;
    left: 43px;
    top: -5px;
    width: 5px;
    height: 11px;
    background: #666;
}

.z-plus {
    width: 7px;
    height: 7px;
    margin-left: 4px;
    background:
        linear-gradient(#666, #666) center / 7px 2px no-repeat,
        linear-gradient(#666, #666) center / 2px 7px no-repeat;
}

.zoom span {
    margin-left: 11px;
    color: #444;
}

#taskstrip {
    flex: 1;
    background: #1c2128;
}

#taskstrip i {
    display: block;
    width: 344px;
    margin-left: 48px;
    height: 100%;
    background: #d8d8d8;
}
```
